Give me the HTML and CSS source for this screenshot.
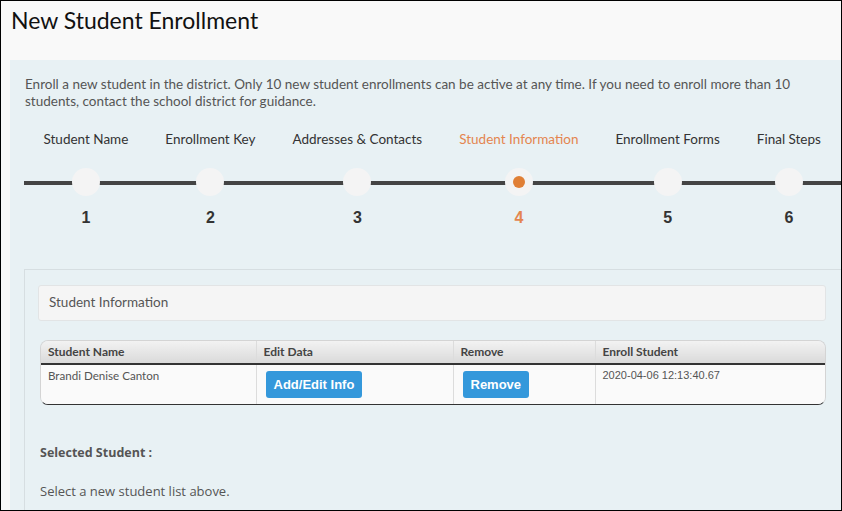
FILE: index.html
```html
<!DOCTYPE html>
<html lang="en">
<head>
    <meta charset="UTF-8">
    <meta name="viewport" content="width=device-width, initial-scale=1.0">
    <title>New Student Enrollment</title>
    <link rel="stylesheet" href="styles.css">
</head>
<body>
    <div class="frame">
        <h1 class="title">New Student Enrollment</h1>
        <div class="panel">
            <p class="intro">Enroll a new student in the district. Only 10 new student enrollments can be active at any time. If you need to enroll more than 10 students, contact the school district for guidance.</p>

            <div class="steps">
                <div class="step">
                    <span class="step-label">Student Name</span>
                    <span class="dot"></span>
                    <span class="step-num">1</span>
                </div>
                <div class="step">
                    <span class="step-label">Enrollment Key</span>
                    <span class="dot"></span>
                    <span class="step-num">2</span>
                </div>
                <div class="step">
                    <span class="step-label">Addresses &amp; Contacts</span>
                    <span class="dot"></span>
                    <span class="step-num">3</span>
                </div>
                <div class="step active">
                    <span class="step-label">Student Information</span>
                    <span class="dot"></span>
                    <span class="step-num">4</span>
                </div>
                <div class="step">
                    <span class="step-label">Enrollment Forms</span>
                    <span class="dot"></span>
                    <span class="step-num">5</span>
                </div>
                <div class="step">
                    <span class="step-label">Final Steps</span>
                    <span class="dot"></span>
                    <span class="step-num">6</span>
                </div>
            </div>

            <div class="section">
                <div class="section-header">Student Information</div>

                <div class="table-wrap">
                    <table class="students">
                        <thead>
                            <tr>
                                <th class="col-name">Student Name</th>
                                <th class="col-edit">Edit Data</th>
                                <th class="col-remove">Remove</th>
                                <th class="col-enroll">Enroll Student</th>
                            </tr>
                        </thead>
                        <tbody>
                            <tr>
                                <td>Brandi Denise Canton</td>
                                <td><button class="btn">Add/Edit Info</button></td>
                                <td><button class="btn">Remove</button></td>
                                <td class="date">2020-04-06 12:13:40.67</td>
                            </tr>
                        </tbody>
                    </table>
                </div>

                <h4 class="selected-title">Selected Student :</h4>
                <p class="selected-text">Select a new student list above.</p>
            </div>
        </div>
    </div>
</body>
</html>
```

FILE: styles.css
```css
* {
    margin: 0;
    padding: 0;
    box-sizing: border-box;
}

body {
    font-family: Lato, "Open Sans", sans-serif;
    background-color: #f9f9f9;
    color: #333;
}

.frame {
    width: 842px;
    height: 511px;
    border: 1px solid #000;
    overflow: hidden;
    background-color: #f9f9f9;
}

.title {
    font-size: 23px;
    font-weight: normal;
    line-height: 26px;
    color: #111;
    padding: 6px 10px 0;
    height: 59px;
}

.panel {
    margin-left: 9px;
    height: 460px;
    background-color: #e8f1f4;
    padding: 16px 0 0 14px;
}

.intro {
    font-size: 13.5px;
    line-height: 17px;
    color: #555;
    padding-left: 1px;
    padding-right: 20px;
}

/* progress steps */
.steps {
    display: flex;
    margin-top: 21px;
    padding-left: 1px;
    background: linear-gradient(#444, #444) 0 50px / 100% 4px no-repeat;
}

.step {
    display: flex;
    flex-direction: column;
    align-items: center;
    padding: 0 18.5px;
}

.step-label {
    font-size: 13.5px;
    line-height: 17px;
    color: #333;
    white-space: nowrap;
}

.dot {
    display: flex;
    justify-content: center;
    align-items: center;
    margin-top: 20px;
    width: 28px;
    height: 28px;
    border-radius: 50%;
    background-color: #f4f4f4;
}

.step-num {
    margin-top: 12px;
    font-size: 16px;
    line-height: 20px;
    font-weight: bold;
    font-family: "Liberation Sans", Arial, sans-serif;
    color: #333;
}

.step.active .step-label,
.step.active .step-num {
    color: #e4854f;
}

.step.active .dot::after {
    content: "";
    width: 12px;
    height: 12px;
    border-radius: 50%;
    background-color: #e07f35;
}

/* student section */
.section {
    margin-top: 41px;
    border-top: 1px solid #d6dee1;
    border-left: 1px solid #d6dee1;
    padding: 15px 15px 0 13px;
    height: 260px;
}

.section-header {
    height: 36px;
    background-color: #f5f5f5;
    border: 1px solid #e2e4e5;
    border-radius: 3px;
    font-size: 13.5px;
    line-height: 32px;
    color: #555;
    padding-left: 10px;
}

.table-wrap {
    margin: 19px 0 0 2px;
    border: 1px solid #d4d4d4;
    border-bottom: 1px solid #333;
    border-radius: 8px;
    overflow: hidden;
}

.students {
    width: 100%;
    border-collapse: collapse;
    table-layout: fixed;
}

.students th {
    text-align: left;
    font-size: 12px;
    font-weight: bold;
    color: #444;
    height: 23px;
    padding: 0 7px 1px;
    background: linear-gradient(#f2f2f2, #dadada);
    border-bottom: 2px solid #333;
    border-left: 1px solid #dcdcdc;
}

.students td {
    vertical-align: top;
    font-size: 11.6px;
    color: #555;
    height: 40px;
    padding: 4px 7px 0;
    background-color: #fafafa;
    border-left: 1px solid #dcdcdc;
}

.students th:first-child,
.students td:first-child {
    border-left: none;
}

.col-name {
    width: 215px;
}

.col-edit {
    width: 197px;
}

.col-remove {
    width: 142px;
}

.students td.date {
    font-family: "Liberation Sans", Arial, sans-serif;
    font-size: 11px;
}

.btn {
    margin: 2px 0 0 2px;
    height: 27px;
    padding: 0 8px;
    background-color: #3498db;
    color: #fff;
    border: none;
    border-radius: 3px;
    font-family: "Liberation Sans", Arial, sans-serif;
    font-size: 13px;
    font-weight: bold;
}

.selected-title {
    margin: 40px 0 0 2px;
    font-family: "Open Sans", sans-serif;
    font-size: 12.5px;
    line-height: 16px;
    color: #555;
}

.selected-text {
    margin: 22px 0 0 2px;
    font-family: "Open Sans", sans-serif;
    font-size: 13px;
    line-height: 16px;
    color: #555;
}
```
